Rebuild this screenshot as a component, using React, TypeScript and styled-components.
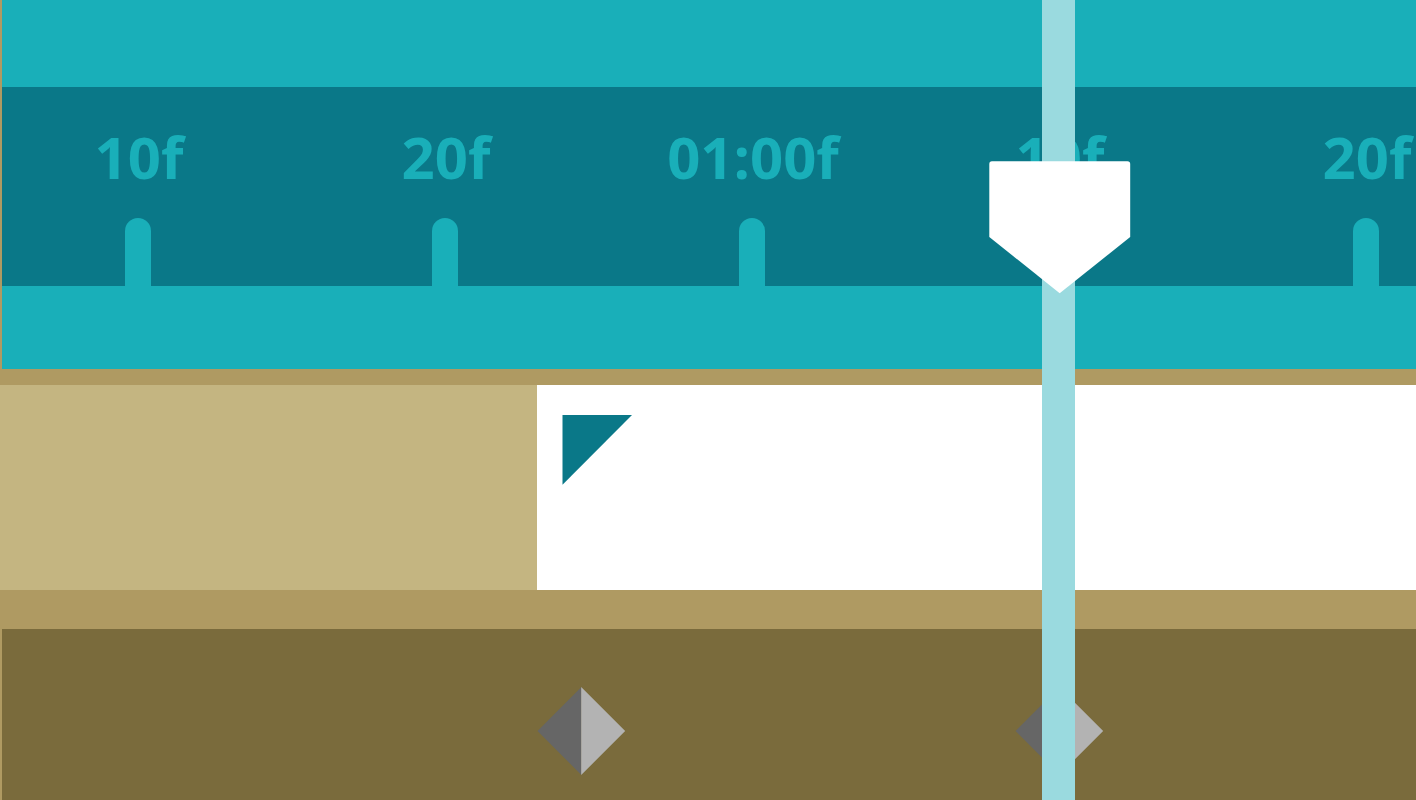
import React from "react";
import styled, { createGlobalStyle } from "styled-components";

const color = {
  teal: "#19afb9",
  deepTeal: "#0a7888",
  playhead: "#9adadf",
  sand: "#af9a62",
  lightSand: "#c4b581",
  olive: "#7a6b3c",
};

const GlobalStyle = createGlobalStyle`
  * { box-sizing: border-box; }
  body { margin: 0; background: ${color.sand}; }
`;

const Timeline = styled.main`
  position: relative;
  display: flex;
  flex-direction: column;
  min-height: 100vh;
  overflow: hidden;
  background: ${color.sand};
  font-family: "Segoe UI", "Open Sans", "Noto Sans", sans-serif;
`;

const Header = styled.header`
  margin-left: 2px;
  padding: 87px 0 83px;
  background: ${color.teal};
`;

const Ruler = styled.ol`
  display: flex;
  gap: 281px;
  height: 199px;
  margin: 0;
  padding: 30px 0 0 123px;
  list-style: none;
  overflow: hidden;
  background: ${color.deepTeal};
`;

const Mark = styled.li`
  flex: none;
  display: flex;
  flex-direction: column;
  justify-content: space-between;
  align-items: center;
  width: 26px;
`;

const MarkLabel = styled.span`
  padding-left: 2px;
  color: ${color.teal};
  font-size: 58px;
  font-weight: 700;
  line-height: 80px;
  white-space: nowrap;
`;

const Tick = styled.span`
  width: 26px;
  height: 68px;
  border-radius: 13px 13px 0 0;
  background: ${color.teal};
`;

const ClipTrack = styled.section`
  display: flex;
  height: 205px;
  margin: 16px 0 39px;
  background: ${color.lightSand};
`;

const Clip = styled.div`
  flex: 1;
  margin-left: 537px;
  padding: 30px 25px;
  background: #fff;
`;

const KeyTrack = styled.section`
  flex: 1;
  display: flex;
  align-items: flex-start;
  gap: 389px;
  min-height: 171px;
  margin-left: 2px;
  padding: 58px 0 0 535px;
  background: ${color.olive};
`;

const Drawing = styled.svg`
  display: block;
  flex: none;
`;

const Playhead = styled.div`
  position: absolute;
  top: 0;
  bottom: 0;
  left: 989px;
  display: flex;
  justify-content: center;
  width: 142px;
`;

const PlayheadLine = styled.div`
  width: 33px;
  margin-right: 3px;
  background: ${color.playhead};
`;

const PlayheadHandle = styled(Drawing)`
  position: absolute;
  top: 161px;
  left: 0;
`;

const marks = ["10f", "20f", "01:00f", "10f", "20f"];

function Keyframe() {
  return (
    <Drawing width="89" height="88" viewBox="0 0 89 88" role="img" aria-label="Keyframe">
      <path d="M.5 44 44.400 0V88Z" fill="#666" />
      <path d="M44.200 0 88.200 44 44.200 88Z" fill="#b3b3b3" />
    </Drawing>
  );
}

export default function App() {
  return (
    <>
      <GlobalStyle />
      <Timeline>
        <Header>
          <Ruler>
            {marks.map((label, index) => (
              <Mark key={index}>
                <MarkLabel>{label}</MarkLabel>
                <Tick />
              </Mark>
            ))}
          </Ruler>
        </Header>
        <ClipTrack>
          <Clip>
            <Drawing width="70" height="70" viewBox="0 0 70 70" aria-hidden="true">
              <path d="M.5 0H70L.5 69.8Z" fill={color.deepTeal} />
            </Drawing>
          </Clip>
        </ClipTrack>
        <KeyTrack>
          <Keyframe />
          <Keyframe />
        </KeyTrack>
        <Playhead>
          <PlayheadLine />
          <PlayheadHandle width="142" height="133" viewBox="0 0 142 133" aria-hidden="true">
            <path d="M.3 3Q.3.3 3 .3H138.500Q141.200.3 141.200 3V76L70.700 132.300.3 76Z" fill="#fff" />
          </PlayheadHandle>
        </Playhead>
      </Timeline>
    </>
  );
}
